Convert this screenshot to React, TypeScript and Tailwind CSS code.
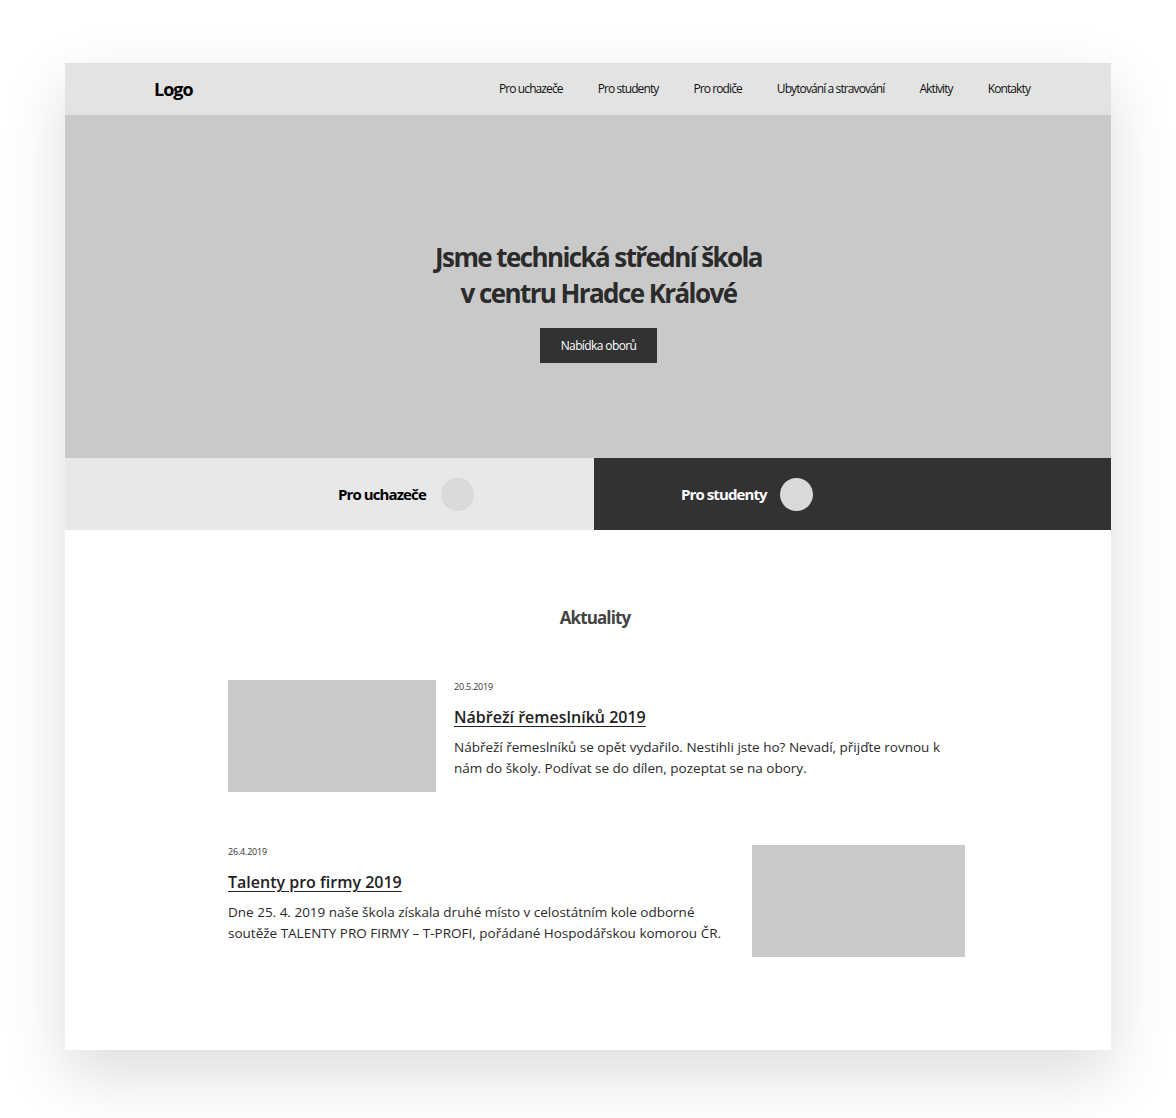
const nav = ["Pro uchazeče", "Pro studenty", "Pro rodiče", "Ubytování a stravování", "Aktivity", "Kontakty"];

const font = { fontFamily: '"Open Sans", "Noto Sans", sans-serif' };

export default function App() {
    return (
        <div className="min-h-[1118px] bg-white pt-[63px] pb-[68px]" style={font}>
            <div className="mx-auto w-[1046px] bg-white shadow-[0_24px_60px_rgba(0,0,0,0.14)]">
                {/* Header */}
                <header className="h-[52px] bg-[#e3e3e3] flex items-center pl-[89px] pr-[81px]">
                    <div className="text-[18px] font-bold tracking-[-1px] text-black">Logo</div>
                    <nav className="ml-auto flex items-center gap-[35px] text-[12px] tracking-[-0.9px] text-[#111]">
                        {nav.map((n) => (
                            <a key={n} href="#">{n}</a>
                        ))}
                    </nav>
                </header>

                {/* Hero */}
                <section className="h-[343px] bg-[#c9c9c9] flex flex-col items-center justify-center pt-[29px] pl-[21px]">
                    <h1 className="text-center text-[26px] leading-[36px] font-bold tracking-[-1.6px] text-[#2b2b2b]">
                        Jsme technická střední škola
                        <br />v centru Hradce Králové
                    </h1>
                    <button className="mt-[17px] w-[117px] h-[35px] bg-[#323232] text-white text-[12px] tracking-[-0.6px]">
                        Nabídka oborů
                    </button>
                </section>

                {/* Tabs */}
                <div className="flex h-[72px]">
                    <div className="w-[529px] bg-[#e8e8e8] flex items-center pl-[273px] gap-[15px]">
                        <span className="text-[15px] font-bold tracking-[-0.9px] text-black">Pro uchazeče</span>
                        <span className="w-[33px] h-[33px] rounded-full bg-[#d9d9d9]" />
                    </div>
                    <div className="flex-1 bg-[#323232] flex items-center pl-[87px] gap-[13px]">
                        <span className="text-[15px] font-bold tracking-[-0.9px] text-white">Pro studenty</span>
                        <span className="w-[33px] h-[33px] rounded-full bg-[#d9d9d9]" />
                    </div>
                </div>

                {/* News */}
                <section className="pt-[75px] pb-[93px]">
                    <h2 className="text-center pl-[14px] text-[17px] font-bold tracking-[-0.9px] text-[#444]">Aktuality</h2>

                    <div className="ml-[163px] w-[737px] mt-[49px] flex flex-col gap-[53px]">
                        <article className="flex gap-[18px]">
                            <div className="w-[208px] h-[112px] bg-[#c9c9c9] shrink-0" />
                            <div className="flex-1">
                                <div className="text-[9px] tracking-[-0.2px] text-[#333]">20.5.2019</div>
                                <h3 className="mt-[12px] text-[16px] font-semibold text-[#222] underline underline-offset-[3px]">
                                    Nábřeží řemeslníků 2019
                                </h3>
                                <p className="mt-[8px] text-[13.5px] leading-[21px] text-[#2a2a2a] w-[511px]">
                                    Nábřeží řemeslníků se opět vydařilo. Nestihli jste ho? Nevadí, přijďte rovnou k nám do školy. Podívat se do dílen, pozeptat se na obory.
                                </p>
                            </div>
                        </article>

                        <article className="flex gap-[18px]">
                            <div className="flex-1">
                                <div className="text-[9px] tracking-[-0.2px] text-[#333]">26.4.2019</div>
                                <h3 className="mt-[12px] text-[16px] font-semibold text-[#222] underline underline-offset-[3px]">
                                    Talenty pro firmy 2019
                                </h3>
                                <p className="mt-[8px] text-[13.5px] leading-[21px] text-[#2a2a2a]">
                                    Dne 25. 4. 2019 naše škola získala druhé místo v celostátním kole odborné soutěže TALENTY PRO FIRMY – T-PROFI, pořádané Hospodářskou komorou ČR.
                                </p>
                            </div>
                            <div className="w-[213px] h-[112px] bg-[#c9c9c9] shrink-0" />
                        </article>
                    </div>
                </section>
            </div>
        </div>
    );
}
